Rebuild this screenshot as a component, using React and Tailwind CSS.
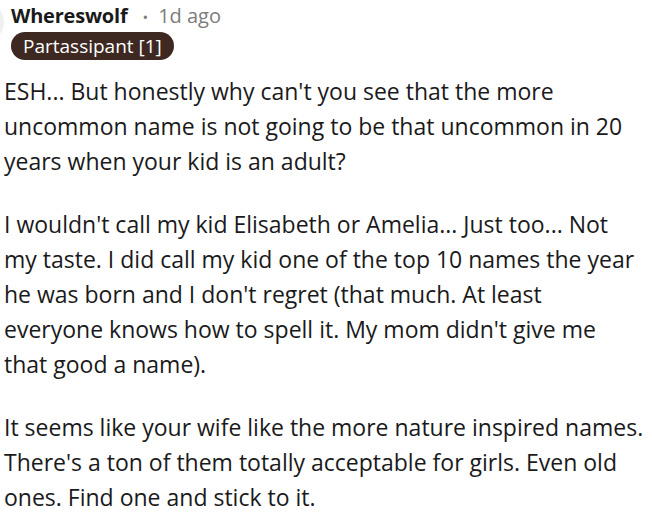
import React from "react";

const paragraphs = [
  [
    "ESH... But honestly why can't you see that the more",
    "uncommon name is not going to be that uncommon in 20",
    "years when your kid is an adult?",
  ],
  [
    "I wouldn't call my kid Elisabeth or Amelia... Just too... Not",
    "my taste. I did call my kid one of the top 10 names the year",
    "he was born and I don't regret (that much. At least",
    "everyone knows how to spell it. My mom didn't give me",
    "that good a name).",
  ],
  [
    "It seems like your wife like the more nature inspired names.",
    "There's a ton of them totally acceptable for girls. Even old",
    "ones. Find one and stick to it.",
  ],
];

export default function App() {
  return (
    <div
      className="w-[652px] h-[514px] overflow-hidden bg-white text-[#1a1a1b]"
      style={{ fontFamily: '"Open Sans", "Noto Sans", sans-serif' }}
    >
      <div className="flex items-start">
        <div className="w-[40px] h-[40px] -ml-[36px] mt-[2px] rounded-full bg-[#eef0f2] shrink-0" />
        <div className="flex flex-col pl-[7px]">
          <div className="flex items-center gap-[15px] h-[32px]">
            <span className="text-[20px] font-bold tracking-[-0.2px]">Whereswolf</span>
            <span className="text-[20px] text-[#7c7c7c]">
              <span className="text-[15px] mr-[10px]">•</span>1d ago
            </span>
          </div>
          <span className="self-start px-[12px] h-[28px] leading-[28px] rounded-full bg-[#3d2921] text-white text-[19px]">
            Partassipant [1]
          </span>
        </div>
      </div>
      <div className="pl-[4px] pt-[14px] flex flex-col gap-[28px] text-[23px] leading-[35px]">
        {paragraphs.map((lines, i) => (
          <p key={i}>
            {lines.map((line, j) => (
              <span key={j} className="block whitespace-nowrap">
                {line}
              </span>
            ))}
          </p>
        ))}
      </div>
    </div>
  );
}
